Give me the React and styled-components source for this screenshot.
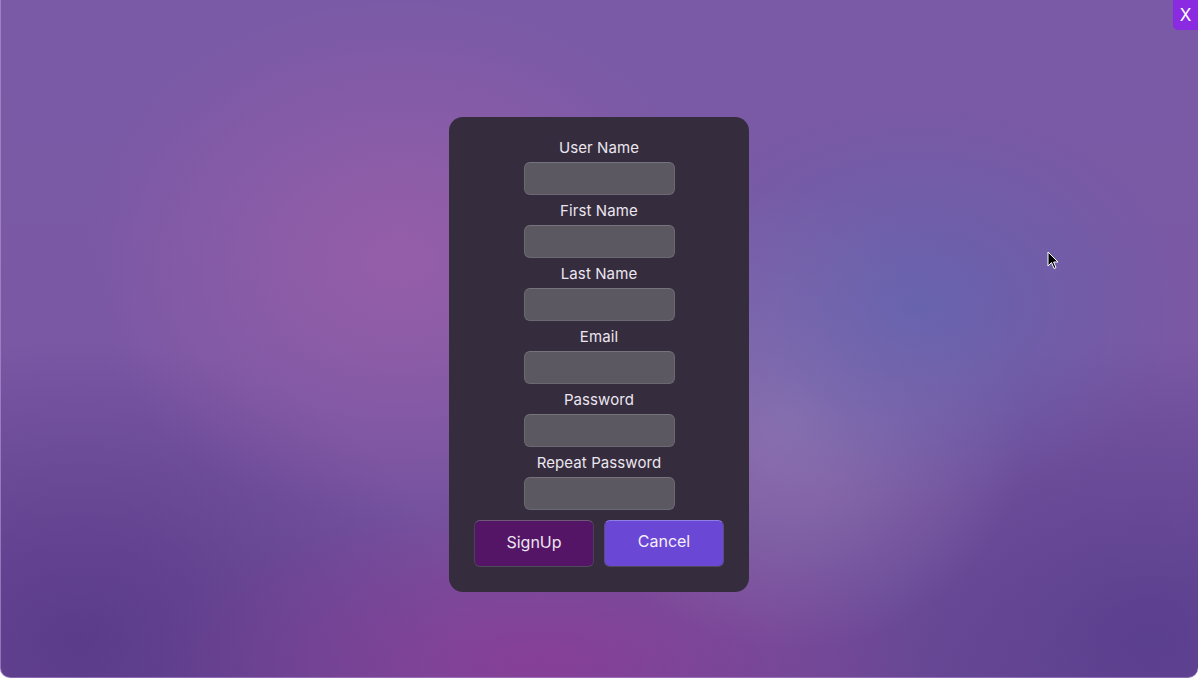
import React from "react";
import styled, { createGlobalStyle } from "styled-components";

const Global = createGlobalStyle`
  html, body { margin: 0; padding: 0; height: 100%; }
  body { font-family: Inter, "Noto Sans", "Liberation Sans", sans-serif; overflow: hidden; }
  #root { height: 100%; }
`;

const Screen = styled.div`
  position: relative;
  box-sizing: border-box;
  height: 678px;
  width: 1198px;
  box-shadow: inset 1px 0 0 rgba(190, 160, 220, 0.55), inset 0 -1px 0 rgba(190, 160, 220, 0.45);
  border-radius: 0 0 10px 10px;
  overflow: hidden;
  display: flex;
  flex-direction: column;
  align-items: center;
  padding-top: 117px;
  background:
    radial-gradient(ellipse 260px 200px at 920px 305px, rgba(100, 100, 175, 0.85), rgba(100, 100, 175, 0) 100%),
    radial-gradient(ellipse 240px 230px at 790px 420px, rgba(150, 125, 180, 0.7), rgba(150, 125, 180, 0) 100%),
    radial-gradient(ellipse 320px 260px at 400px 260px, rgba(155, 95, 170, 0.85), rgba(155, 95, 170, 0) 100%),
    radial-gradient(ellipse 380px 160px at 540px 660px, rgba(140, 60, 150, 0.8), rgba(140, 60, 150, 0) 100%),
    radial-gradient(ellipse 380px 300px at 80px 640px, rgba(85, 55, 135, 0.8), rgba(85, 55, 135, 0) 100%),
    radial-gradient(ellipse 380px 300px at 1150px 640px, rgba(85, 60, 140, 0.8), rgba(85, 60, 140, 0) 100%),
    linear-gradient(180deg, #7a5aa6 0%, #7a58a4 50%, #6f4c98 100%);
`;

const CloseButton = styled.button`
  position: absolute;
  top: 0;
  right: 0;
  width: 25px;
  height: 30px;
  padding: 0;
  border: none;
  border-radius: 0 0 0 5px;
  background: #8a2be2;
  color: #ffffff;
  font-family: Inter, "Liberation Sans", sans-serif;
  font-size: 17px;
  line-height: 30px;
  cursor: pointer;
`;

const Cursor = styled.svg`
  position: absolute;
  left: 1047px;
  top: 251px;
  pointer-events: none;
`;

const Panel = styled.form`
  box-sizing: border-box;
  width: 300px;
  background: #352c3d;
  border-radius: 14px;
  padding: 22px 25px 25px;
  display: flex;
  flex-direction: column;
  align-items: center;
`;

const Field = styled.div`
  display: flex;
  flex-direction: column;
  align-items: center;
  margin-bottom: 7px;
`;

const Label = styled.label`
  color: #ebe6ef;
  font-size: 15px;
  line-height: 18px;
  letter-spacing: 0.1px;
  margin-bottom: 5px;
`;

const Input = styled.input`
  box-sizing: border-box;
  width: 151px;
  height: 33px;
  border-radius: 6px;
  border: 1px solid #6c6873;
  border-top-color: #77737d;
  background: #5c5862;
  color: #fff;
  outline: none;
`;

const Buttons = styled.div`
  display: flex;
  gap: 10px;
  margin-top: 3px;
`;

const Button = styled.button`
  box-sizing: border-box;
  width: 120px;
  height: 47px;
  border-radius: 6px;
  border: 1px solid ${(p) => (p.$primary ? "#4e3f58" : "#5a4d80")};
  border-top-color: ${(p) => (p.$primary ? "#6e5a78" : "#8f7ee6")};
  border-bottom-color: #4e4a5a;
  background: ${(p) => (p.$primary ? "#541566" : "#6b47d6")};
  color: ${(p) => (p.$primary ? "#ece4f0" : "#f4f0fa")};
  font-family: Inter, "Liberation Sans", sans-serif;
  font-size: 16px;
  padding: ${(p) => (p.$primary ? "0 0 3px" : "0 0 5px")};
  cursor: pointer;
`;

const fields = ["User Name", "First Name", "Last Name", "Email", "Password", "Repeat Password"];

export default function App() {
  return (
    <>
      <Global />
      <Screen>
        <CloseButton type="button">X</CloseButton>
        <Panel onSubmit={(e) => e.preventDefault()}>
          {fields.map((f) => (
            <Field key={f}>
              <Label>{f}</Label>
              <Input type={f.includes("Password") ? "password" : "text"} />
            </Field>
          ))}
          <Buttons>
            <Button $primary type="submit">SignUp</Button>
            <Button type="button">Cancel</Button>
          </Buttons>
        </Panel>
        <Cursor width="12" height="19" viewBox="0 0 12 19">
          <path d="M1 1 L1 15 L4.5 11.5 L7 17.5 L9 16.6 L6.6 11 L11 11 Z" fill="#000" stroke="#fff" strokeWidth="1" strokeLinejoin="round" />
        </Cursor>
      </Screen>
    </>
  );
}
